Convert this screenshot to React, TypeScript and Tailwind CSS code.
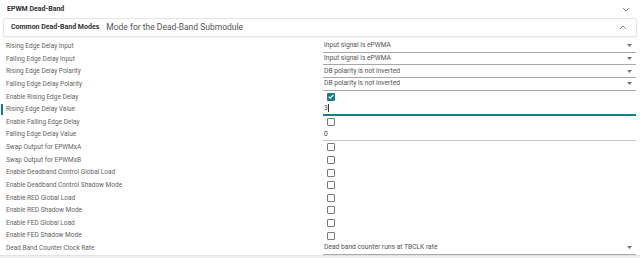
import { useState } from 'react';

type Row =
  | { label: string; kind: 'select'; value: string }
  | { label: string; kind: 'check'; checked: boolean }
  | { label: string; kind: 'text'; value: string; active?: boolean };

const rows: Row[] = [
  { label: 'Rising Edge Delay Input', kind: 'select', value: 'Input signal is ePWMA' },
  { label: 'Falling Edge Delay Input', kind: 'select', value: 'Input signal is ePWMA' },
  { label: 'Rising Edge Delay Polarity', kind: 'select', value: 'DB polarity is not inverted' },
  { label: 'Falling Edge Delay Polarity', kind: 'select', value: 'DB polarity is not inverted' },
  { label: 'Enable Rising Edge Delay', kind: 'check', checked: true },
  { label: 'Rising Edge Delay Value', kind: 'text', value: '3', active: true },
  { label: 'Enable Falling Edge Delay', kind: 'check', checked: false },
  { label: 'Falling Edge Delay Value', kind: 'text', value: '0' },
  { label: 'Swap Output for EPWMxA', kind: 'check', checked: false },
  { label: 'Swap Output for EPWMxB', kind: 'check', checked: false },
  { label: 'Enable Deadband Control Global Load', kind: 'check', checked: false },
  { label: 'Enable Deadband Control Shadow Mode', kind: 'check', checked: false },
  { label: 'Enable RED Global Load', kind: 'check', checked: false },
  { label: 'Enable RED Shadow Mode', kind: 'check', checked: false },
  { label: 'Enable FED Global Load', kind: 'check', checked: false },
  { label: 'Enable FED Shadow Mode', kind: 'check', checked: false },
  { label: 'Dead Band Counter Clock Rate', kind: 'select', value: 'Dead band counter runs at TBCLK rate' },
];

const Chevron = ({ up }: { up?: boolean }) => (
  <svg width="8" height="5" viewBox="0 0 8 5" className={up ? 'rotate-180' : ''}>
    <path d="M1 1l3 3 3-3" fill="none" stroke="#8a8a8a" strokeWidth="1" />
  </svg>
);

const Caret = () => (
  <svg width="5" height="3" viewBox="0 0 5 3">
    <path d="M0 0h5L2.5 3z" fill="#757575" />
  </svg>
);

const Checkbox = ({ checked }: { checked: boolean }) =>
  checked ? (
    <div className="w-[8px] h-[8px] rounded-[1px] bg-[#177d8a] flex items-center justify-center">
      <svg width="6" height="5" viewBox="0 0 6 5">
        <path d="M0.6 2.6l1.6 1.5L5.4 0.8" fill="none" stroke="white" strokeWidth="1.2" />
      </svg>
    </div>
  ) : (
    <div className="w-[8px] h-[8px] rounded-[1px] border border-[#7a7a7a] bg-white" />
  );

const App = () => {
  const [open] = useState(true);

  return (
    <div className="w-[640px] h-[258px] bg-white overflow-hidden font-['Roboto',sans-serif] text-[#5f5f5f] relative">
      <div className="flex items-center justify-between h-[18px] pt-[1px] pl-[7px] pr-[10px]">
        <span className="text-[7px] font-bold text-[#333]">EPWM Dead-Band</span>
        <Chevron />
      </div>
      <div className="mx-[3px] h-[19px] border border-[#e4e4e4] rounded-[2px] shadow-[0_1px_2px_rgba(0,0,0,0.06)] flex items-center pl-[7px] pr-[9px]">
        <span className="text-[7px] font-bold text-[#333]">Common Dead-Band Modes</span>
        <span className="text-[8.5px] text-[#555] ml-[7px]">Mode for the Dead-Band Submodule</span>
        <span className="ml-auto">
          <Chevron up={open} />
        </span>
      </div>
      <div className="mt-[3px] flex flex-col">
        {rows.map((r) => (
          <div key={r.label} className="relative flex items-center h-[12.625px]">
            {r.kind === 'text' && r.active && (
              <div className="absolute left-[1px] top-[1px] bottom-[1px] w-[2px] bg-[#177d8a]" />
            )}
            <span className="w-[323px] pl-[6px] text-[6.5px] leading-none text-[#646464]">{r.label}</span>
            {r.kind === 'select' && (
              <div className="flex-1 h-full mr-[4px] flex items-center justify-between border-b border-[#a8a8a8] pl-[1px] pr-[4px]">
                <span className="text-[6.7px] leading-none text-[#555]">{r.value}</span>
                <Caret />
              </div>
            )}
            {r.kind === 'check' && (
              <div className="pl-[4px]">
                <Checkbox checked={r.checked} />
              </div>
            )}
            {r.kind === 'text' && (
              <div
                className={
                  r.active
                    ? 'flex-1 h-full mr-[4px] flex items-center border-b-2 border-[#177d8a] pl-[1px]'
                    : 'flex-1 h-full mr-[4px] flex items-center border-b border-[#c8c8c8] pl-[1px]'
                }
              >
                <span className="text-[6.7px] leading-none text-[#444]">{r.value}</span>
                {r.active && <span className="w-px h-[8px] bg-[#333] ml-[0.5px]" />}
              </div>
            )}
          </div>
        ))}
      </div>
      <div className="absolute left-0 right-0 bottom-0 h-[3px] bg-[#eeeeee] border-t border-[#e2e2e2]" />
    </div>
  );
};

export default App;
